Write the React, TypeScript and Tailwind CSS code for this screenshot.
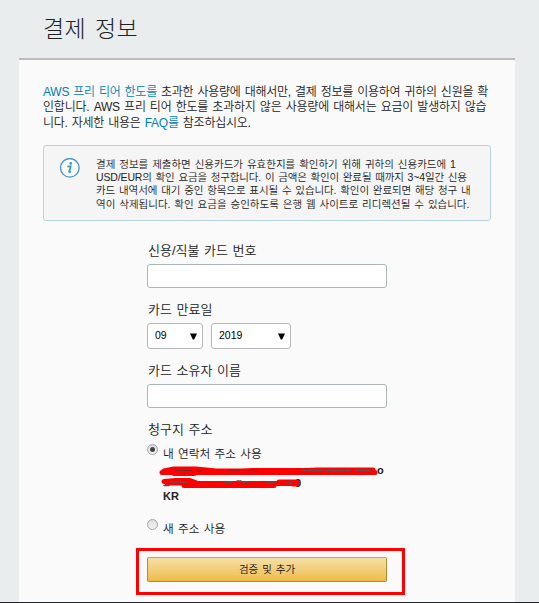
import { useState } from "react";
import type { ReactNode } from "react";

function TextField({ label }: { label: string }) {
  return (
    <label className="block">
      <span className="block h-[22px] whitespace-nowrap pl-px text-[13px] leading-[18px] [word-spacing:1px]">
        {label}
      </span>
      <input
        type="text"
        className="block h-6 w-60 rounded-[3px] border border-[#aab7b8] bg-white px-2 text-[11px] outline-none"
      />
    </label>
  );
}

function Dropdown({ value, className }: { value: string; className: string }) {
  return (
    <button
      type="button"
      className={`flex h-[26px] items-center justify-between rounded-[3px] border border-[#b5b9b9] bg-white pr-[5px] pl-[7px] text-[10.5px] text-black ${className}`}
    >
      <span>{value}</span>
      <svg width="7" height="7" viewBox="0 0 7 7" aria-hidden>
        <path d="M0 .5h7L4.2 6.5H2.8z" fill="#000" />
      </svg>
    </button>
  );
}

function Radio({
  checked,
  onSelect,
  children,
}: {
  checked: boolean;
  onSelect: () => void;
  children: ReactNode;
}) {
  return (
    <button type="button" role="radio" aria-checked={checked} onClick={onSelect} className="flex h-4 items-start">
      <span className="flex size-[11px] shrink-0 items-center justify-center rounded-full border border-[#a3a3a3] bg-linear-to-b from-[#dedede] to-[#f3f3f3]">
        {checked && <span className="size-[5px] rounded-full bg-[#444]" />}
      </span>
      <span className="mt-[2px] ml-[5px] whitespace-nowrap text-[11.7px] leading-[15px] [word-spacing:1px]">
        {children}
      </span>
    </button>
  );
}

export default function App() {
  const [address, setAddress] = useState<"contact" | "new">("contact");

  return (
    <div className="h-[603px] w-[539px] overflow-hidden bg-[#e9eded] font-['Liberation_Sans','Noto_Sans_CJK_KR',sans-serif] font-[350] text-[#222]">
      <h1 className="h-[58px] pt-[13px] pl-[43px] text-[23px] leading-8 font-light tracking-[0.4px] [word-spacing:2px]">
        결제 정보
      </h1>
      <main className="ml-[19px] h-[544px] w-[496px] border-t-2 border-[#bbb] bg-[#fafafa] pt-[25px] pl-6">
        <p className="whitespace-nowrap text-[12px] leading-[15.4px] tracking-[-0.25px] [word-spacing:1px]">
          <a className="text-[#007dbc]">AWS 프리 티어 한도를</a> 초과한 사용량에 대해서만, 결제 정보를 이용하여 귀하의 신원을 확
          <br />
          <span className="tracking-[-0.2px]">
            인합니다. AWS 프리 티어 한도를 초과하지 않은 사용량에 대해서는 요금이 발생하지 않습
          </span>
          <br />
          니다. 자세한 내용은 <a className="text-[#007dbc]">FAQ를</a> 참조하십시오.
        </p>

        <section className="mt-[14px] flex h-[76px] w-[448px] rounded-[3px] border border-[#b7d3dd] bg-[#f5f5f5] pt-3 pl-[15px]">
          <svg className="shrink-0" width="21" height="21" viewBox="0 0 21 21" aria-hidden>
            <circle cx="10.8" cy="9.8" r="9.3" fill="#fafcfc" stroke="#4796bb" strokeWidth="1.3" />
            <circle cx="11.8" cy="5.4" r="1.4" fill="#4796bb" />
            <path
              d="M8.3 8.3h3.4L10.2 13.7c-.2.9.4.7 1.7-.3"
              fill="none"
              stroke="#4796bb"
              strokeWidth="1.8"
            />
          </svg>
          <p className="ml-4 whitespace-nowrap text-[10.5px] leading-[13.1px] [word-spacing:1px]">
            결제 정보를 제출하면 신용카드가 유효한지를 확인하기 위해 귀하의 신용카드에 1
            <br />
            <span className="tracking-[-0.14px]">
              USD/EUR의 확인 요금을 청구합니다. 이 금액은 확인이 완료될 때까지 3~4일간 신용
            </span>
            <br />
            <span className="tracking-[-0.08px]">
              카드 내역서에 대기 중인 항목으로 표시될 수 있습니다. 확인이 완료되면 해당 청구 내
            </span>
            <br />
            역이 삭제됩니다. 확인 요금을 승인하도록 은행 웹 사이트로 리디렉션될 수 있습니다.
          </p>
        </section>

        <form className="mt-[21px] ml-[104px] w-60" onSubmit={(e) => e.preventDefault()}>
          <TextField label="신용/직불 카드 번호" />
          <div className="mt-[13px]">
            <span className="block h-[22px] pl-px text-[13px] leading-[18px] [word-spacing:1px]">카드 만료일</span>
            <div className="flex gap-2">
              <Dropdown value="09" className="w-14" />
              <Dropdown value="2019" className="w-20" />
            </div>
          </div>
          <div className="mt-[13px]">
            <TextField label="카드 소유자 이름" />
          </div>

          <div className="mt-[13px]">
            <span className="block h-[23px] pl-px text-[13px] leading-[18px] [word-spacing:1px]">청구지 주소</span>
            <Radio checked={address === "contact"} onSelect={() => setAddress("contact")}>
              내 연락처 주소 사용
            </Radio>
            <div className="relative mt-[4px] ml-4 h-[41px] text-[11px] leading-[13px] font-bold">
              <div className="mt-px h-[13px] pl-[214px]">o</div>
              <div className="pl-[132px]">9</div>
              <div>KR</div>
              {/* hides the contact address */}
              <svg
                className="absolute top-px -left-1"
                width="226"
                height="28"
                viewBox="0 0 226 28"
                fill="none"
                stroke="#f00"
                strokeLinecap="round"
                strokeLinejoin="round"
                aria-hidden
              >
                <path d="M3 7.5h213M5 6l10-2h22l20 2h25l12-.5h56l8-.5h56M15 8.5h20" strokeWidth="5" />
                <path d="M5 16.5l12-1h14l8 3h98M8 18h20M25 20.5h90M120 17h18M134 19h4" strokeWidth="5" />
                <path d="M12 4.5h4M18 5.5h14M38 6h6M70 5h10M90 5h8" stroke="#7d2427" strokeWidth="1.2" strokeDasharray="2 1" />
                <path d="M144 5.5h20M167 5.5h24M197 5.5h14" stroke="#6a4a50" strokeWidth="1.8" strokeDasharray="3 1.5" />
                <path d="M5 20.5h5M12 17h16M66 17h7M78 16h4M84 17h6M108 18h9M128 18h5" stroke="#6a4a50" strokeWidth="1.5" strokeDasharray="2 1" />
              </svg>
            </div>
            <div className="mt-[14px]">
              <Radio checked={address === "new"} onSelect={() => setAddress("new")}>
                새 주소 사용
              </Radio>
            </div>
          </div>

          <div className="mt-[13px] -ml-[11px] h-[47px] w-[269px] border-[3px] border-[#f00] pt-[6px] pl-2">
            <button
              type="submit"
              className="block h-[25px] w-60 rounded-[2px] border border-[#b38b2e] border-t-[#c7a44f] bg-linear-to-b from-[#f6dfa5] to-[#eebb44] text-[10.5px] text-[#111] [word-spacing:1px]"
            >
              검증 및 추가
            </button>
          </div>
        </form>
      </main>
      <div className="h-px bg-[#22222a]" />
    </div>
  );
}
